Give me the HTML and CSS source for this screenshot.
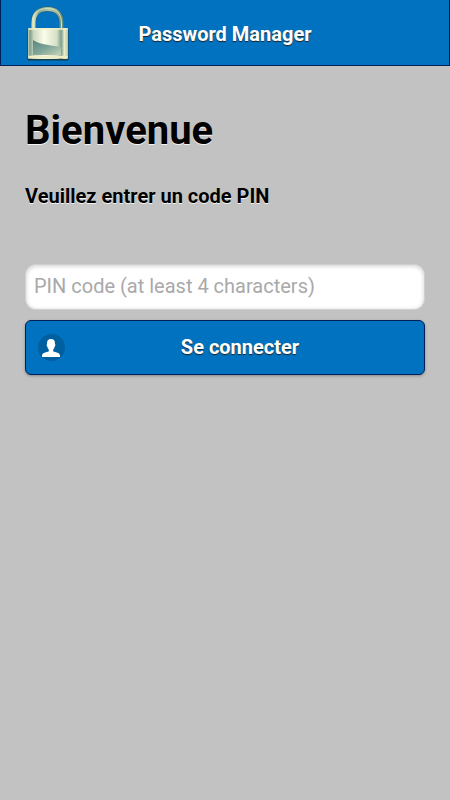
FILE: index.html
```html
<!DOCTYPE html>
<html lang="fr">

<head>
    <meta charset="UTF-8">
    <meta name="viewport" content="width=device-width, initial-scale=1.0">
    <title>Password Manager</title>
    <link rel="stylesheet" href="styles.css">
</head>

<body>
    <header class="header">
        <svg class="logo" viewBox="0 0 46 58" aria-hidden="true">
            <defs>
                <linearGradient id="arc" x1="0" x2="1">
                    <stop offset="0" stop-color="#dfe8c4"/>
                    <stop offset=".2" stop-color="#7fa898"/>
                    <stop offset=".6" stop-color="#b3c8a9"/>
                    <stop offset=".85" stop-color="#8fb09b"/>
                    <stop offset="1" stop-color="#5f9083"/>
                </linearGradient>
                <linearGradient id="corps" x1="0" x2="1">
                    <stop offset="0" stop-color="#c5d1b3"/>
                    <stop offset=".05" stop-color="#7d9d8d"/>
                    <stop offset=".14" stop-color="#cbd8bf"/>
                    <stop offset=".4" stop-color="#fbfce9"/>
                    <stop offset=".72" stop-color="#d5e0c6"/>
                    <stop offset=".83" stop-color="#7c9f90"/>
                    <stop offset=".91" stop-color="#e9edcc"/>
                    <stop offset="1" stop-color="#b5c5a5"/>
                </linearGradient>
                <linearGradient id="reflet" x1="0" x2="1" y1="0" y2="1">
                    <stop offset="0" stop-color="#55857e"/>
                    <stop offset=".5" stop-color="#7fa599"/>
                    <stop offset="1" stop-color="#c5d5ba"/>
                </linearGradient>
            </defs>
            <path d="M8.5 25V18C8.5 8 14.5 4 22.5 4S36.5 8 36.5 18V25" fill="none" stroke="#315f65" stroke-width="5"/>
            <path d="M8.5 25V18C8.5 8 14.5 4 22.5 4S36.5 8 36.5 18V25" fill="none" stroke="url(#arc)" stroke-width="4"/>
            <path d="M7.5 24V18C7.5 8 14 3.5 22.500 3.5S36.500 8 36.500 18V24" fill="none" stroke="#d5dfba" stroke-width="1"/>
            <rect x="2.5" y="24" width="41" height="31.5" rx="1" fill="#173d52"/>
            <rect x="3" y="23" width="40" height="31" rx="1" fill="url(#corps)"/>
            <path d="M8 35C13 39 24 40 36 42V50H8Z" fill="url(#reflet)"/>
            <path d="M3.5 24H42.5" stroke="#f1f0c9" stroke-width="1.5"/>
            <path d="M3.5 52H42.5" stroke="#efedc5" stroke-width="2.5"/>
        </svg>
        <h1 class="titre">Password Manager</h1>
    </header>
    <main class="contenu">
        <h1>Bienvenue</h1>
        <h3>Veuillez entrer un code PIN</h3>
        <form>
            <input type="password" class="champ" placeholder="PIN code (at least 4 characters)">
            <button type="button" class="bouton">
                <span class="icone">
                    <svg viewBox="0 0 18 18" aria-hidden="true">
                        <path d="M9 0C6.2 0 4.8 1.8 5 5C4.4 5.4 4.6 7 5.3 7.5C5.6 9 6.2 10 6.8 10.6V12.3C5 13.6 0 13.3 0 16.5V18H18V16.5C18 13.3 13 13.6 11.2 12.3V10.6C11.8 10 12.4 9 12.7 7.5C13.4 7 13.6 5.4 13 5C13.2 1.8 11.8 0 9 0Z" fill="#fff"/>
                    </svg>
                </span>
                <span class="texte">Se connecter</span>
            </button>
        </form>
    </main>
</body>

</html>
```
FILE: styles.css
```css
* {
    box-sizing: border-box;
}

body {
    background-color: #c2c2c2;
    color: #000;
    font-family: Roboto, sans-serif;
    margin: 0;
    min-height: 100vh;
    text-shadow: 0 1px 0 #f3f3f3;
}

.header {
    align-items: center;
    background-color: #0072bf;
    border: 1px solid #001f5b;
    border-top: none;
    color: white;
    display: grid;
    grid-template-columns: 98px 1fr 98px;
    height: 66px;
    text-shadow: 0 1px 1px #222;
}

.logo {
    display: block;
    height: 58px;
    margin: 3px 0 0 24px;
    width: 46px;
}

.titre {
    font-size: 20px;
    line-height: 26px;
    margin: 2px 0 0;
    text-align: center;
}

.contenu {
    padding: 40px 25px 0;
}

.contenu h1 {
    font-size: 40px;
    font-weight: bold;
    line-height: 50px;
    margin: 0;
}

.contenu h3 {
    font-size: 20px;
    font-weight: bold;
    line-height: 26px;
    margin: 27px 0 55px;
}

.champ {
    background-color: white;
    border: 1px solid #cfcfcf;
    border-radius: 11px;
    box-shadow: inset 0 1px 4px rgba(0, 0, 0, .2);
    display: block;
    font-family: inherit;
    font-size: 20px;
    height: 46px;
    padding: 0 8px 2px;
    width: 100%;
}

.champ::placeholder {
    color: #a9a9a9;
}

.bouton {
    align-items: center;
    background-color: #0072bf;
    border: 1px solid #001f5b;
    border-radius: 6px;
    box-shadow: 0 1px 3px rgba(0, 0, 0, .3);
    color: white;
    display: grid;
    font-family: inherit;
    font-size: 20px;
    font-weight: bold;
    grid-template-columns: 27px 1fr;
    height: 55px;
    margin-top: 10px;
    padding: 0 9px 0 12px;
    text-shadow: 0 1px 1px #222;
    width: 100%;
}

.texte {
    padding-bottom: 2px;
}

.icone {
    align-items: center;
    background-color: #005f9f;
    border-radius: 50%;
    display: flex;
    height: 27px;
    justify-content: center;
    padding-right: 1px;
    width: 27px;
}

.icone svg {
    height: 18px;
    width: 18px;
}
```
